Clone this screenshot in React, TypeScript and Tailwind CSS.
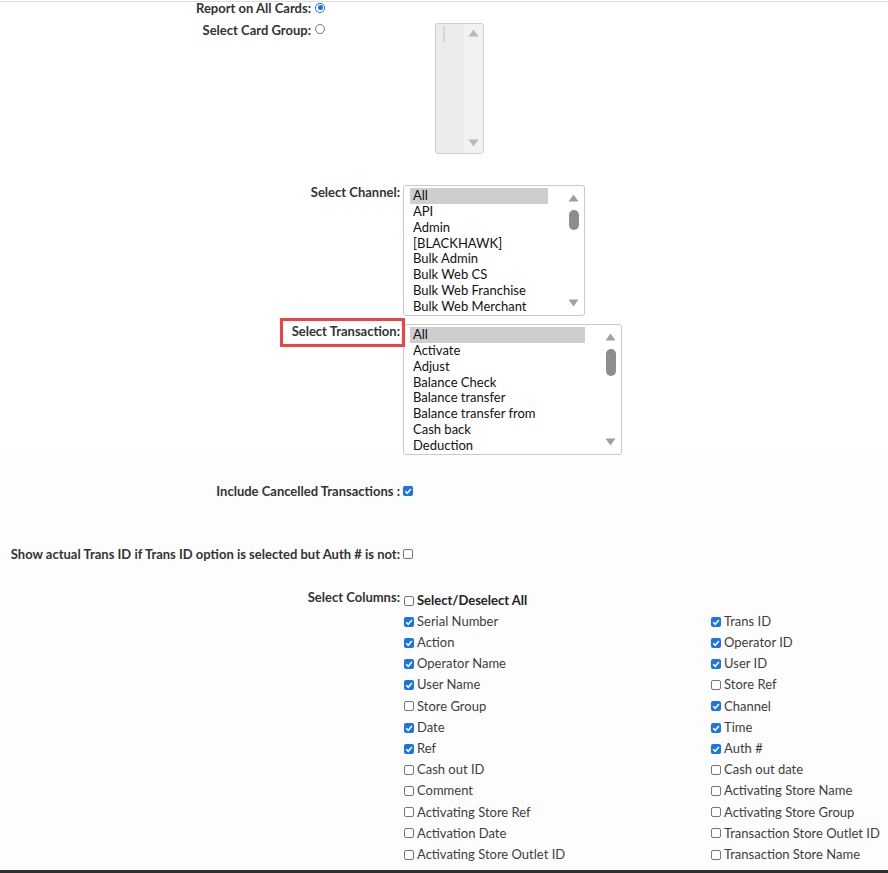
import type { ReactNode } from "react";

const channels = [
  "All",
  "API",
  "Admin",
  "[BLACKHAWK]",
  "Bulk Admin",
  "Bulk Web CS",
  "Bulk Web Franchise",
  "Bulk Web Merchant",
];

const transactions = [
  "All",
  "Activate",
  "Adjust",
  "Balance Check",
  "Balance transfer",
  "Balance transfer from",
  "Cash back",
  "Deduction",
];

type Col = { label: string; on: boolean };

const columns: [Col, Col][] = [
  [{ label: "Serial Number", on: true }, { label: "Trans ID", on: true }],
  [{ label: "Action", on: true }, { label: "Operator ID", on: true }],
  [{ label: "Operator Name", on: true }, { label: "User ID", on: true }],
  [{ label: "User Name", on: true }, { label: "Store Ref", on: false }],
  [{ label: "Store Group", on: false }, { label: "Channel", on: true }],
  [{ label: "Date", on: true }, { label: "Time", on: true }],
  [{ label: "Ref", on: true }, { label: "Auth #", on: true }],
  [{ label: "Cash out ID", on: false }, { label: "Cash out date", on: false }],
  [{ label: "Comment", on: false }, { label: "Activating Store Name", on: false }],
  [{ label: "Activating Store Ref", on: false }, { label: "Activating Store Group", on: false }],
  [{ label: "Activation Date", on: false }, { label: "Transaction Store Outlet ID", on: false }],
  [{ label: "Activating Store Outlet ID", on: false }, { label: "Transaction Store Name", on: false }],
];

function CheckBox({ checked }: { checked: boolean }) {
  if (checked) {
    return (
      <span className="flex h-[10px] w-[10px] shrink-0 items-center justify-center rounded-[2px] bg-[#1a73e8]">
        <svg viewBox="0 0 10 10" className="h-[10px] w-[10px]">
          <path d="M2.2 5.3 4.2 7.3 7.9 2.9" fill="none" stroke="#fff" strokeWidth="1.6" />
        </svg>
      </span>
    );
  }
  return <span className="block h-[10px] w-[10px] shrink-0 rounded-[2px] border border-[#767676] bg-white" />;
}

function Radio({ checked }: { checked: boolean }) {
  if (checked) {
    return (
      <span className="flex h-[10px] w-[10px] shrink-0 items-center justify-center rounded-full bg-[#1a73e8]">
        <span className="flex h-[8px] w-[8px] items-center justify-center rounded-full bg-white">
          <span className="h-[5px] w-[5px] rounded-full bg-[#1a73e8]" />
        </span>
      </span>
    );
  }
  return <span className="block h-[10px] w-[10px] shrink-0 rounded-full border border-[#767676] bg-white" />;
}

function Arrow({ up, color }: { up?: boolean; color: string }) {
  return (
    <svg viewBox="0 0 11 8" className="block h-[8px] w-[11px]">
      <path d={up ? "M5.5 0.5 10.5 7.5H0.5Z" : "M0.5 0.5H10.5L5.5 7.5Z"} fill={color} />
    </svg>
  );
}

function ListBox({ items, width, thumb }: { items: string[]; width: string; thumb: string }) {
  return (
    <div className={`flex h-[131px] ${width} rounded-[3px] border border-[#c9c9c9] bg-white`}>
      <ul className="min-w-0 flex-1 pl-[6px] pr-[16px] pt-[2px]">
        {items.map((item, i) => (
          <li
            key={item}
            className={`h-[15.85px] pl-[3px] text-[13px] leading-[15.85px] whitespace-nowrap text-[#111] ${
              i === 0 ? "bg-[#cecece]" : ""
            }`}
          >
            {item}
          </li>
        ))}
      </ul>
      <div className="flex w-[20px] shrink-0 flex-col items-center pr-[1px] pb-[8px] pt-[8px]">
        <Arrow up color="#a0a0a0" />
        <div className={`mt-[8px] w-[10px] rounded-full bg-[#8d8d8d] ${thumb}`} />
        <div className="flex-1" />
        <Arrow color="#a0a0a0" />
      </div>
    </div>
  );
}

const labelCls = "text-right text-[13px] font-bold leading-[14px] text-[#333]";

function Row({ label, children, className = "" }: { label: ReactNode; children: ReactNode; className?: string }) {
  return (
    <div className={`flex items-start ${className}`}>
      <div className={`w-[400px] shrink-0 ${labelCls}`}>{label}</div>
      <div className="ml-[3px] flex min-w-0 flex-1 items-start">{children}</div>
    </div>
  );
}

export default function App() {
  return (
    <div className="flex h-[873px] flex-col overflow-hidden bg-white font-['Lato','Open_Sans',sans-serif]">
      <div className="pt-px">
        <div className="h-px bg-[#dedede]" />
      </div>

      <div className="flex h-[11px] items-center">
        <span className={`w-[311px] shrink-0 ${labelCls}`}>Report on All Cards:</span>
        <span className="ml-[4px] flex">
          <Radio checked />
        </span>
      </div>

      <div className="mt-[10px] flex items-start">
        <span className={`w-[311px] shrink-0 ${labelCls}`}>Select Card Group:</span>
        <span className="ml-[4px] mt-[1px] flex">
          <Radio checked={false} />
        </span>
        <div className="ml-[110px] flex h-[131px] w-[49px] overflow-hidden rounded-[3px] border border-[#cfcfcf] bg-[#ececec]">
          <div className="flex-1 pl-[7px] pt-[2px]">
            <div className="h-[16px] w-[2px] bg-[#d6d6d6]" />
          </div>
          <div className="flex w-[19px] flex-col items-center bg-[#f1f1f1] pb-[6px] pt-[5px]">
            <Arrow up color="#b8b8b8" />
            <div className="flex-1" />
            <Arrow color="#b8b8b8" />
          </div>
        </div>
      </div>

      <Row label="Select Channel:" className="mt-[31px]">
        <ListBox items={channels} width="w-[182px]" thumb="h-[20px]" />
      </Row>

      <Row
        className="mt-[8px]"
        label={
          <span className="relative inline-block">
            Select Transaction:
            <span className="absolute -bottom-[9px] -left-[12px] -right-[5px] -top-[6px] border-[3px] border-[#ee4343]" />
          </span>
        }
      >
        <ListBox items={transactions} width="w-[219px]" thumb="h-[27px]" />
      </Row>

      <div className="flex min-h-0 flex-1 flex-col bg-[#fdfdfd]">
        <Row label="Include Cancelled Transactions :" className="mt-[29px]">
          <span className="mt-[2px] flex">
            <CheckBox checked />
          </span>
        </Row>

        <Row label="Show actual Trans ID if Trans ID option is selected but Auth # is not:" className="mt-[49px]">
          <span className="mt-[2px] flex">
            <CheckBox checked={false} />
          </span>
        </Row>

        <Row label="Select Columns:" className="mt-[29px]">
          <div className="ml-px flex-1">
            <div className="flex h-[21px] items-center gap-[3px]">
              <CheckBox checked={false} />
              <span className="text-[13px] font-bold text-[#222]">Select/Deselect All</span>
            </div>
            <div className="grid grid-cols-[307px_1fr] auto-rows-[21.2px]">
              {columns.flatMap(([a, b]) =>
                [a, b].map((c) => (
                  <div key={c.label} className="flex items-center gap-[3px]">
                    <CheckBox checked={c.on} />
                    <span className="whitespace-nowrap text-[13px] text-[#3d3d3d]">{c.label}</span>
                  </div>
                ))
              )}
              {/* next row, cut off by the bottom bar */}
              <div className="flex items-center">
                <CheckBox checked={false} />
              </div>
              <div className="flex items-center">
                <CheckBox checked={false} />
              </div>
            </div>
          </div>
        </Row>
      </div>

      <div className="h-[3px] shrink-0 bg-[#2e2e2e]" />
    </div>
  );
}
